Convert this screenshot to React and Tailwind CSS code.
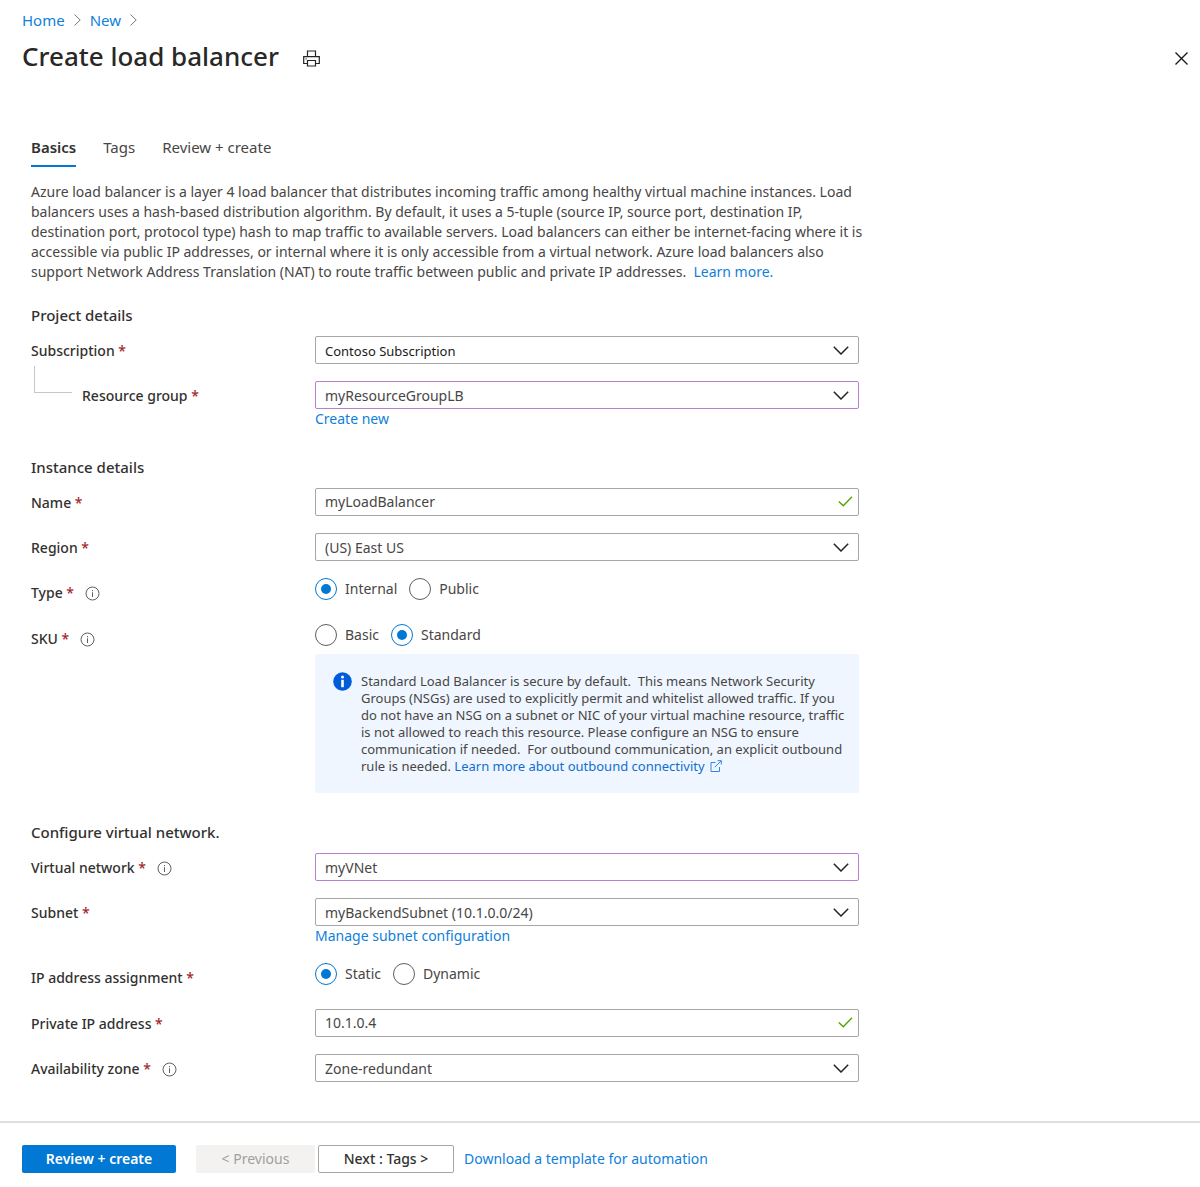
import { useState } from "react";

const labelText = "text-sm font-medium leading-5 text-[#323130]";
const linkText = "text-sm leading-5 text-[#0f7fdb] hover:underline";

function InfoIcon() {
  return (
    <svg className="ml-[11px] size-[15px] shrink-0" viewBox="0 0 15 15" fill="none" stroke="#605e5c" aria-hidden="true">
      <circle cx="7.5" cy="7.5" r="6.5" />
      <path d="M7.5 6.3V11M7.5 4V5.2" />
    </svg>
  );
}

function Chevron() {
  return (
    <svg className="pointer-events-none absolute right-2.5 top-2.5 h-[9px] w-4" viewBox="0 0 16 9" fill="none" stroke="#252423" strokeWidth="1.5" aria-hidden="true">
      <path d="M0.8 0.8L8 8L15.2 0.8" />
    </svg>
  );
}

function Check() {
  return (
    <svg className="pointer-events-none absolute right-1.5 top-2 h-[11px] w-[15px]" viewBox="0 0 15 11" fill="none" stroke="#57a300" strokeWidth="1.4" aria-hidden="true">
      <path d="M0.8 5.4L5.3 9.8L14 0.8" />
    </svg>
  );
}

function Row({ id, label, info, group, nested, className = "", children }) {
  const Label = group ? "span" : "label";
  const tie = group ? { id: `${id}-label` } : { htmlFor: id };
  return (
    <div className={`grid grid-cols-[284px_minmax(0,1fr)] items-start ${className}`}>
      <div className="flex h-[30px] items-center">
        {nested && <span className="mb-[18px] ml-[3px] mr-2.5 h-[27px] w-[38px] self-end border-b border-l border-[#c8c6c4]" />}
        <Label {...tie} className={labelText}>
          {label} <span className="text-[#a4262c]">*</span>
        </Label>
        {info && <InfoIcon />}
      </div>
      <div>{children}</div>
    </div>
  );
}

function Select({ id, value, accent, dark }) {
  return (
    <div className="relative">
      <select
        id={id}
        className={`block h-7 w-full appearance-none rounded-xs border bg-white px-[9px] pt-0.5 leading-5 ${accent ? "border-[#b77fd0]" : "border-[#a8a6a4]"} ${dark ? "text-[13px] text-[#1b1a19]" : "text-sm text-[#484644]"}`}
      >
        <option>{value}</option>
      </select>
      <Chevron />
    </div>
  );
}

function Input({ id, value }) {
  return (
    <div className="relative">
      <input
        id={id}
        type="text"
        defaultValue={value}
        className="block h-7 w-full rounded-xs border border-[#a8a6a4] bg-white px-[9px] pb-0.5 text-sm leading-5 text-[#484644]"
      />
      <Check />
    </div>
  );
}

function Radios({ id, options, initial }) {
  const [value, setValue] = useState(initial);
  return (
    <div role="radiogroup" aria-labelledby={`${id}-label`} className="flex gap-3">
      {options.map((o) => (
        <label key={o} className="flex h-[22px] items-center gap-2 text-sm leading-5 text-[#484644]">
          <input
            type="radio"
            name={id}
            checked={value === o}
            onChange={() => setValue(o)}
            className="size-[22px] appearance-none rounded-full border border-[#605e5c] bg-white bg-clip-content p-[5px] checked:border-[#0078d4] checked:bg-[#0078d4]"
          />
          {o}
        </label>
      ))}
    </div>
  );
}

function Heading({ children, className }) {
  return <h2 className={`mb-[9px] text-[15px] font-medium leading-6 text-[#323130] ${className}`}>{children}</h2>;
}

function Crumb({ children }) {
  return (
    <li className="flex items-center">
      <a href="#" className="text-[15px] leading-6 text-[#0f7fdb] hover:underline">{children}</a>
      <svg className="mx-[9px] h-3 w-[7px]" viewBox="0 0 7 12" fill="none" stroke="#7a7876" aria-hidden="true">
        <path d="M0.5 0.5L6.2 6L0.5 11.5" />
      </svg>
    </li>
  );
}

function Lines({ lines }) {
  return lines.map((line) => (
    <span key={line} className="lg:block">{line} </span>
  ));
}

export default function App() {
  return (
    <div className="bg-white font-['Noto_Sans',sans-serif] text-[#323130]">
      <header className="pl-[22px] pr-3 pt-2">
        <nav aria-label="Breadcrumb">
          <ol className="flex">
            <Crumb>Home</Crumb>
            <Crumb>New</Crumb>
          </ol>
        </nav>
        <div className="mt-1.5 flex items-center">
          <h1 className="text-[26px] font-medium leading-9 text-[#292827]">Create load balancer</h1>
          <button type="button" aria-label="Print" className="ml-6 mt-1">
            <svg className="size-[17px]" viewBox="0 0 17 17" fill="none" stroke="#252423" strokeWidth="1.2" aria-hidden="true">
              <path d="M4.5 6.5V1h8v5.5M4.5 13.5H0.7V6.7h15.6v6.8h-3.8" />
              <path d="M4.5 10.5h8V16h-8z" />
              <path d="M2.6 8.8h1" />
            </svg>
          </button>
          <button type="button" aria-label="Close" className="ml-auto mt-1">
            <svg className="size-[13px]" viewBox="0 0 13 13" fill="none" stroke="#1b1a19" strokeWidth="1.4" aria-hidden="true">
              <path d="M0.5 0.5l12 12M12.5 0.5l-12 12" />
            </svg>
          </button>
        </div>
      </header>

      <main className="ml-[31px] mr-4 mt-[61px]">
        <div role="tablist" className="flex gap-[27px] text-[15px] leading-6">
          <button type="button" role="tab" aria-selected="true" className="border-b-2 border-[#0078d4] pb-1.5 font-semibold">Basics</button>
          <button type="button" role="tab" aria-selected="false" className="pb-2 text-[#484644]">Tags</button>
          <button type="button" role="tab" aria-selected="false" className="pb-2 text-[#484644]">Review + create</button>
        </div>
        <p className="mt-[15px] max-w-[848px] text-sm leading-5 text-[#484644]">
          <Lines
            lines={[
              "Azure load balancer is a layer 4 load balancer that distributes incoming traffic among healthy virtual machine instances. Load",
              "balancers uses a hash-based distribution algorithm. By default, it uses a 5-tuple (source IP, source port, destination IP,",
              "destination port, protocol type) hash to map traffic to available servers. Load balancers can either be internet-facing where it is",
              "accessible via public IP addresses, or internal where it is only accessible from a virtual network. Azure load balancers also",
            ]}
          />
          <span>support Network Address Translation (NAT) to route traffic between public and private IP addresses.&nbsp; </span>
          <a href="#" className={linkText}>Learn more.</a>
        </p>

        <form className="max-w-[828px]">
          <Heading className="mt-[21px]">Project details</Heading>
          <Row id="subscription" label="Subscription">
            <Select id="subscription" value="Contoso Subscription" dark />
          </Row>
          <Row id="group" label="Resource group" nested className="mt-[15px]">
            <Select id="group" value="myResourceGroupLB" accent />
            <a href="#" className={`block ${linkText}`}>Create new</a>
          </Row>

          <Heading className="mt-[26px]">Instance details</Heading>
          <Row id="name" label="Name">
            <Input id="name" value="myLoadBalancer" />
          </Row>
          <Row id="region" label="Region" className="mt-[15px]">
            <Select id="region" value="(US) East US" />
          </Row>
          <Row id="type" label="Type" info group className="mt-[15px]">
            <Radios id="type" options={["Internal", "Public"]} initial="Internal" />
          </Row>
          <Row id="sku" label="SKU" info group className="mt-4">
            <Radios id="sku" options={["Basic", "Standard"]} initial="Standard" />
            <div className="mt-2 flex gap-[9px] rounded-xs bg-[#eff6ff] pb-[18px] pl-[18px] pr-2 pt-[19px]">
              <svg className="-mt-px size-[19px] shrink-0" viewBox="0 0 19 19" aria-hidden="true">
                <circle cx="9.5" cy="9.5" r="9.3" fill="#015cda" />
                <circle cx="9.5" cy="5" r="1.5" fill="#fff" />
                <path d="M8.2 7.8h2.6v7.4H8.2z" fill="#fff" />
              </svg>
              <p className="text-[13px] leading-[17px] text-[#484644]">
                <Lines
                  lines={[
                    "Standard Load Balancer is secure by default.\u00a0 This means Network Security",
                    "Groups (NSGs) are used to explicitly permit and whitelist allowed traffic. If you",
                    "do not have an NSG on a subnet or NIC of your virtual machine resource, traffic",
                    "is not allowed to reach this resource. Please configure an NSG to ensure",
                    "communication if needed.\u00a0 For outbound communication, an explicit outbound",
                  ]}
                />
                <span>rule is needed. </span>
                <a href="#" className="text-[#0f6fd0] hover:underline">
                  Learn more about outbound connectivity
                  <svg className="ml-[5px] inline size-3 align-[-1px]" viewBox="0 0 12 12" fill="none" stroke="#2f86ea" aria-hidden="true">
                    <path d="M5.5 2.5H1v9h8.5V7M7.5 0.7h3.8v3.8M11.2 0.8L4.8 7.2" />
                  </svg>
                </a>
              </p>
            </div>
          </Row>

          <Heading className="mt-[27px]">Configure virtual network.</Heading>
          <Row id="vnet" label="Virtual network" info>
            <Select id="vnet" value="myVNet" accent />
          </Row>
          <Row id="subnet" label="Subnet" className="mt-[15px]">
            <Select id="subnet" value="myBackendSubnet (10.1.0.0/24)" />
            <a href="#" className={`block ${linkText}`}>Manage subnet configuration</a>
          </Row>
          <Row id="assignment" label="IP address assignment" group className="mt-[17px]">
            <Radios id="assignment" options={["Static", "Dynamic"]} initial="Static" />
          </Row>
          <Row id="address" label="Private IP address" className="mt-4">
            <Input id="address" value="10.1.0.4" />
          </Row>
          <Row id="zone" label="Availability zone" info className="mt-[15px]">
            <Select id="zone" value="Zone-redundant" />
          </Row>
        </form>
      </main>

      <footer className="mt-[37px] flex flex-wrap items-center border-t-2 border-[#e1dfdd] px-[22px] pb-3.5 pt-[22px] text-sm leading-5">
        <button type="button" className="h-7 w-[154px] rounded-xs bg-[#0078d4] font-semibold text-white">Review + create</button>
        <button type="button" disabled className="ml-5 h-7 w-[119px] rounded-xs bg-[#f3f2f1] text-[#a19f9d]">&lt; Previous</button>
        <button type="button" className="ml-[3px] h-7 w-[136px] rounded-xs border border-[#a8a6a4] bg-white font-medium text-[#323130]">Next : Tags &gt;</button>
        <a href="#" className={`ml-2.5 ${linkText}`}>Download a template for automation</a>
      </footer>
    </div>
  );
}
